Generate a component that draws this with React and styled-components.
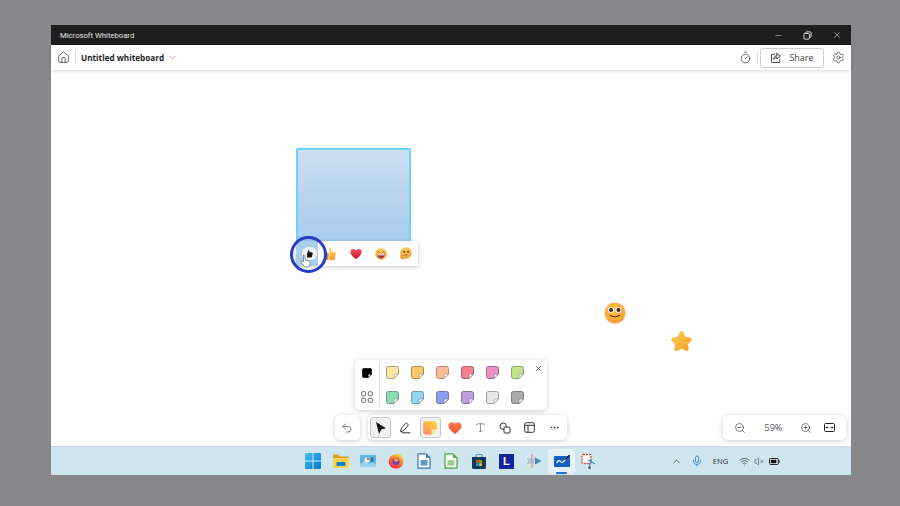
import React from "react";
import styled, { createGlobalStyle } from "styled-components";
import {
  House, ChevronDown, ChevronUp, Timer, Settings, Minus, X, Undo2, Type, MoreHorizontal,
  ZoomIn, ZoomOut, Mic, Wifi, VolumeX,
} from "lucide-react";

const Global = createGlobalStyle`
  html, body { margin: 0; padding: 0; height: 506px; background: #88888c; overflow: hidden; }
  body { font-family: "Open Sans", "Liberation Sans", sans-serif; }
`;

const Page = styled.div`
  width: 900px; height: 506px; padding: 25px 49px 31px 51px; box-sizing: border-box;
`;
const Win = styled.div`
  width: 800px; height: 450px; display: flex; flex-direction: column; background: #fff;
`;
const TitleBar = styled.div`
  height: 20px; flex: none; background: #1e1e1e; color: #e4e4e4; font: 7.7px Roboto, sans-serif;
  display: flex; align-items: center; padding-left: 9px;
`;
const TitleText = styled.span`flex: 1;`;
const WinBtn = styled.span`
  width: 29px; display: flex; justify-content: center; align-items: center; color: #d8d8d8;
`;
const Header = styled.div`
  height: 25px; flex: none; background: #fff; display: flex; align-items: center;
  padding-left: 5px; padding-right: 6px; box-shadow: 0 1px 4px rgba(0,0,0,.16); position: relative; z-index: 2;
`;
const IconSlot = styled.span`
  width: ${p => p.$w || 14}px; display: flex; justify-content: center; align-items: center; color: #2e2e2e; flex: none;
`;
const VRule = styled.span`
  width: 1px; height: 13px; background: #e2e2e2; flex: none;
  margin-left: ${p => p.$l}px; margin-right: ${p => p.$r}px;
`;
const DocTitle = styled.span`
  font: 700 8.2px "Open Sans", sans-serif; color: #1c1c1c; white-space: nowrap;
`;
const Spacer = styled.span`flex: 1;`;
const ShareBtn = styled.div`
  width: 64px; height: 20px; box-sizing: border-box; border: 1px solid #cfcfcf; border-radius: 3px;
  display: flex; align-items: center; justify-content: center; gap: 7px; font-size: 9px; color: #3f3f3f;
  margin-right: 7px;
`;
const Canvas = styled.div`
  flex: 1; position: relative; background: #fff; overflow: hidden;
`;
const Note = styled.div`
  position: absolute; left: 245px; top: 78px; width: 115px; height: 94px; box-sizing: border-box;
  border: 2px solid #6ed3f8; border-bottom: 0; border-radius: 2px 2px 0 0;
  background: linear-gradient(180deg, #cbdff1 0%, #b8d3ec 55%, #a6cdee 100%);
`;
const ReactionBar = styled.div`
  position: absolute; left: 245px; top: 171px; width: 122px; height: 25px; background: #fff; border-radius: 2px;
  box-shadow: 0 1px 5px rgba(0,0,0,.22); display: flex; align-items: center; box-sizing: border-box;
`;
const ReactBtn = styled.span`
  width: 25px; height: 25px; display: flex; align-items: center; justify-content: center; flex: none;
`;
const ActiveReact = styled(ReactBtn)`
  width: 22px; background: #a9cfec; padding-left: 4px; box-sizing: border-box;
`;
const ThumbPill = styled.span`
  width: 15px; height: 13px; border-radius: 6px; background: #eef3f7; display: flex; align-items: center; justify-content: center;
`;
const FocusRing = styled.div`
  position: absolute; left: 239px; top: 166px; width: 37px; height: 37px; border-radius: 50%;
  border: 3px solid #2a3cc6; box-sizing: border-box; z-index: 3;
`;
const Floating = styled.div`
  position: absolute; left: ${p => p.$x}px; top: ${p => p.$y}px; line-height: 0;
`;
const Cursor = styled(Floating)`z-index: 4;`;
const Panel = styled.div`
  position: absolute; background: #fff; border-radius: 5px; box-shadow: 0 1px 5px rgba(0,0,0,.2);
  left: ${p => p.$x}px; top: ${p => p.$y}px; width: ${p => p.$w}px; height: ${p => p.$h}px;
  padding-left: ${p => p.$pl || 0}px;
  display: flex; align-items: center; box-sizing: border-box;
`;
const StickyPanel = styled(Panel)`align-items: stretch;`;
const StickySide = styled.div`
  width: 25px; flex: none; border-right: 1px solid #e3e3e3; margin: 3px 0; display: flex; flex-direction: column;
  justify-content: space-between; align-items: center; box-sizing: border-box; height: 44px;
`;
const SideCell = styled.span`height: 20px; display: flex; align-items: center; justify-content: center; color: #444;`;
const StickyGrid = styled.div`
  display: grid; grid-template-columns: repeat(6, 25px); grid-auto-rows: 25px; padding-bottom: 1px; align-content: center;
`;
const StickyCell = styled.span`display: flex; align-items: center; justify-content: center;`;
const CloseBtn = styled.span`
  position: absolute; left: 179px; top: 4px; color: #222; line-height: 0;
`;
const ToolBtn = styled.span`
  width: ${p => p.$w || 24.9}px; height: 25px; display: flex; align-items: center; justify-content: center; color: #2c2c2c; flex: none;
`;
const ToolSel = styled.span`
  width: 21px; height: 21px; box-sizing: border-box; background: #f0f0f0; border: 1px solid #c9c9c9; border-radius: 3px;
  display: flex; align-items: center; justify-content: center;
`;
const ZoomLabel = styled.span`
  width: 41px; text-align: center; font-size: 9px; color: #555; flex: none;
`;
const Taskbar = styled.div`
  height: 29px; flex: none; background: #cfe6ef; border-top: 1px solid #cbd5da; box-sizing: border-box;
  display: flex; align-items: center; position: relative;
`;
const AppIcons = styled.div`
  display: flex; align-items: center; margin-left: 248.5px; width: 304px;
`;
const AppSlot = styled.span`
  width: 27.6px; height: 25px; flex: none; display: flex; align-items: center; justify-content: center; position: relative;
  background: ${p => (p.$active ? "#e4f1f6" : "transparent")}; border-radius: 3px;
`;
const RunBar = styled.span`
  position: absolute; left: 8px; right: 8px; bottom: 0; height: 2px; border-radius: 1px; background: #1a6fd0;
`;
const Tray = styled.div`
  display: flex; align-items: center; margin-left: 66px; color: #222;
`;
const TraySlot = styled.span`
  width: ${p => p.$w}px; margin-left: ${p => p.$ml || 0}px; display: flex; justify-content: center; align-items: center; flex: none;
`;
const Eng = styled.span`font-size: 7.5px; color: #2e2e2e;`;

const Restore = () => (
  <svg width="9" height="9" viewBox="0 0 10 10" fill="none" stroke="currentColor" strokeWidth="1.1">
    <rect x="1" y="2.8" width="6.2" height="6.2" rx="1" /><path d="M3 2.6V2a1 1 0 0 1 1-1h4a1 1 0 0 1 1 1v4a1 1 0 0 1-1 1h-.6" />
  </svg>
);
const ShareIcon = () => (
  <svg width="12" height="12" viewBox="0 0 16 16" fill="none" stroke="#333" strokeWidth="1.2" strokeLinejoin="round" strokeLinecap="round">
    <path d="M6 3H3a1 1 0 0 0-1 1v9a1 1 0 0 0 1 1h9a1 1 0 0 0 1-1v-3" />
    <path d="M9 2l5 3.6L9 9V7C6.8 7 5.5 8 5 10c0-3 1.5-5 4-5z" />
  </svg>
);
const Sticky = ({ fill, edge, size = 13 }) => (
  <svg width={size} height={size} viewBox="0 0 13 13">
    <path d="M2.5 .5h8a2 2 0 0 1 2 2V8L8 12.5H2.5a2 2 0 0 1-2-2v-8a2 2 0 0 1 2-2z" fill={fill} stroke={edge} strokeWidth="1" />
    <path d="M12.5 8H9.2A1.2 1.2 0 0 0 8 9.2v3.3z" fill="#fff" stroke={edge} strokeWidth=".7" strokeLinejoin="round" />
  </svg>
);
const GradSticky = () => (
  <svg width="14" height="14" viewBox="0 0 13 13">
    <defs><linearGradient id="gs" x1=".8" y1="0" x2=".1" y2="1"><stop offset="0" stopColor="#ffd23f" /><stop offset="1" stopColor="#ff8a62" /></linearGradient></defs>
    <path d="M2.500 .2h8a2.300 2.300 0 0 1 2.300 2.300V8L8 12.800H2.500A2.300 2.300 0 0 1 .2 10.500v-8A2.300 2.300 0 0 1 2.500 .2z" fill="url(#gs)" />
    <path d="M12.800 8H9.200A1.200 1.200 0 0 0 8 9.200v3.600z" fill="#ffe9a8" />
  </svg>
);
const GridIcon = () => (
  <svg width="12" height="12" viewBox="0 0 12 12" fill="none" stroke="#555" strokeWidth=".9">
    <rect x=".7" y=".7" width="4" height="4" rx="1" /><rect x="7.300" y=".7" width="4" height="4" rx="1" />
    <rect x=".7" y="7.300" width="4" height="4" rx="1" /><rect x="7.300" y="7.300" width="4" height="4" rx="1" />
  </svg>
);
const PenIcon = () => (
  <svg width="12" height="12" viewBox="0 0 12 12" fill="none" stroke="#333" strokeWidth="1" strokeLinejoin="round" strokeLinecap="round">
    <path d="M1.700 9.300l.7-3 4-4.700a1.300 1.300 0 0 1 1.900 0l.4.400a1.300 1.300 0 0 1 0 1.800L4.700 8.600z" />
    <path d="M3 10.800h8" />
  </svg>
);
const STICKIES = [
  ["#ffe79e", "#a89c80"], ["#ffc966", "#a08a60"], ["#ffbb95", "#a88e80"], ["#f57f8d", "#986670"], ["#ee8fc8", "#98708c"], ["#c6e08c", "#8c9c74"],
  ["#8fdcb4", "#749c8c"], ["#8fd6f2", "#7496a6"], ["#8c9ff2", "#707aa6"], ["#bd9cdf", "#84749c"], ["#e8e8e8", "#9c9c9c"], ["#ababab", "#808080"],
];

const ThumbDark = () => (
  <svg width="9" height="10" viewBox="0 0 13 14">
    <path d="M5 1.500c1.500 0 1.500 1.500 1.300 3h3.400c1 0 1.500 1 1.300 2L10 11c-.2.700-.6 1-1.400 1H3V6.500L5 1.500z" fill="#141414" />
  </svg>
);
const Thumb = () => (
  <svg width="13" height="14" viewBox="0 0 13 14">
    <defs><linearGradient id="tl" x1="0" y1="0" x2="0" y2="1"><stop offset="0" stopColor="#ffd45a" /><stop offset="1" stopColor="#f0a030" /></linearGradient></defs>
    <path d="M6 1c1.300 0 1.300 2 1 4h3.500c1.200 0 1.500 1 1.300 2l-1 5c-.2.800-.8 1.200-1.600 1.200H5.500V6C5.500 4 4.800 1 6 1z" fill="url(#tl)" />
    <rect x="1.500" y="6" width="3.200" height="7" rx=".8" fill="#e08f2a" />
  </svg>
);
const Heart = ({ size = 12, a = "#ff4d5e", b = "#c8102e", id = "hr" }) => (
  <svg width={size} height={size} viewBox="0 0 14 13">
    <defs><linearGradient id={id} x1="0" y1="0" x2="0" y2="1"><stop offset="0" stopColor={a} /><stop offset="1" stopColor={b} /></linearGradient></defs>
    <path d="M7 12.500C3 9.500.5 7.300.5 4.300.5 2.200 2 .8 3.800.8 5.200.8 6.300 1.500 7 2.700 7.700 1.500 8.800.8 10.200.8c1.800 0 3.300 1.400 3.300 3.500 0 3-2.500 5.200-6.500 8.200z" fill={`url(#${id})`} />
  </svg>
);
const Grin = () => (
  <svg width="12" height="12" viewBox="0 0 12 12">
    <defs><radialGradient id="gr" cx=".4" cy=".3" r=".85"><stop offset="0" stopColor="#ffd457" /><stop offset="1" stopColor="#f4913a" /></radialGradient></defs>
    <circle cx="6" cy="6" r="5.700" fill="url(#gr)" />
    <path d="M2.500 4.500q1-1.500 2 0M7.500 4.500q1-1.500 2 0" stroke="#5a3a2a" strokeWidth=".8" fill="none" />
    <path d="M2.500 6.300h7C9.500 9 8 10.200 6 10.200S2.500 9 2.500 6.300z" fill="#a0305a" />
    <path d="M3 6.300h6v1H3z" fill="#fff" />
  </svg>
);
const Think = () => (
  <svg width="13" height="13" viewBox="0 0 13 13">
    <defs><radialGradient id="th" cx=".45" cy=".3" r=".85"><stop offset="0" stopColor="#ffd050" /><stop offset="1" stopColor="#f19436" /></radialGradient></defs>
    <circle cx="7" cy="6" r="5.700" fill="url(#th)" />
    <circle cx="5.200" cy="4.800" r="1" fill="#5a3a2a" /><circle cx="9" cy="4.800" r="1" fill="#5a3a2a" />
    <path d="M5.500 8h3" stroke="#8a4a2a" strokeWidth=".8" />
    <path d="M1.500 8.500c1.500-.8 3-.5 4 .3 1 .9.600 3-1 3.300-2 .4-3.500-1-3-3.600z" fill="#f5a33e" stroke="#d87f2a" strokeWidth=".4" />
  </svg>
);
const Smiley = () => (
  <svg width="22" height="22" viewBox="0 0 22 22">
    <defs><radialGradient id="sm" cx=".45" cy=".35" r=".8"><stop offset="0" stopColor="#ffc83e" /><stop offset=".7" stopColor="#fba33a" /><stop offset="1" stopColor="#f27a4a" /></radialGradient></defs>
    <circle cx="11" cy="11" r="10.500" fill="url(#sm)" />
    <circle cx="7" cy="8" r="3" fill="#fff" opacity=".85" /><circle cx="14.500" cy="8" r="3" fill="#fff" opacity=".85" />
    <circle cx="7" cy="8" r="2" fill="#3c2440" /><circle cx="14.500" cy="8" r="2" fill="#3c2440" />
    <path d="M6.500 13.500q4.500 2.500 9 0" stroke="#5a2e1e" strokeWidth="1.200" fill="none" strokeLinecap="round" />
  </svg>
);
const Star = () => (
  <svg width="23" height="22" viewBox="0 0 24 23">
    <defs><linearGradient id="st" x1="0" y1="0" x2="1" y2="1"><stop offset="0" stopColor="#ffd24a" /><stop offset="1" stopColor="#f89a2c" /></linearGradient></defs>
    <path d="M12 1.500c1 0 1.500.8 2 1.800l2 4.200 4.600.7c2 .3 2.500 2 1.200 3.300l-3.400 3.300.8 4.700c.3 1.900-1.200 2.800-2.900 2L12 19.300 7.700 21.500c-1.700.8-3.200-.1-2.900-2l.8-4.700-3.400-3.300C.9 10.200 1.400 8.500 3.400 8.200L8 7.500l2-4.200c.5-1 1-1.800 2-1.800z" fill="url(#st)" stroke="#eda23e" strokeWidth=".5" />
  </svg>
);
const HandCursor = () => (
  <svg width="11" height="14" viewBox="0 0 11 14">
    <path d="M3.500 1.200c.6-.6 1.500-.2 1.500.7v4l3.700.8c1 .2 1.600 1 1.400 2l-.6 3c-.2.8-.8 1.300-1.600 1.300H5.500c-.6 0-1.100-.3-1.500-.8L1.200 8.500c-.6-1 .6-2 1.500-1.200l.8.7z" fill="#fff" stroke="#666" strokeWidth=".7" strokeLinejoin="round" />
  </svg>
);
const Arrow = () => (
  <svg width="13" height="14" viewBox="0 0 13 14"><path d="M2 1l10 6.200-4.500 1L5 13z" fill="#111" /></svg>
);
const Shapes = () => (
  <svg width="12" height="12" viewBox="0 0 12 12" fill="none" stroke="#333" strokeWidth="1">
    <circle cx="4.200" cy="4.200" r="3.200" /><rect x="5" y="5" width="6" height="6" rx="1" fill="#fff" />
  </svg>
);
const TableIcon = () => (
  <svg width="11" height="11" viewBox="0 0 11 11" fill="none" stroke="#333" strokeWidth="1">
    <rect x=".7" y=".7" width="9.600" height="9.600" rx="1.500" /><path d="M.7 3.300h9.600M4 3.300v7" />
  </svg>
);
const FitIcon = () => (
  <svg width="11" height="9" viewBox="0 0 11 9" fill="none" stroke="#222" strokeWidth="1">
    <rect x=".5" y=".5" width="10" height="8" rx="1" /><path d="M2 4.500h2.500M2 4.500l1-1M2 4.500l1 1M9 4.500H6.500M9 4.500l-1-1M9 4.500l-1 1" strokeWidth=".8" />
  </svg>
);
const Battery = () => (
  <svg width="11" height="7" viewBox="0 0 11 7">
    <rect x=".5" y=".5" width="8.800" height="6" rx="1" fill="none" stroke="#222" /><rect x="1.800" y="1.800" width="5.500" height="3.400" fill="#111" /><rect x="9.700" y="2.300" width="1" height="2.400" fill="#222" />
  </svg>
);

const Win11 = () => (
  <svg width="16" height="16" viewBox="0 0 16 16">
    <defs><linearGradient id="w" x1="0" y1="0" x2="1" y2="1"><stop offset="0" stopColor="#3cc4f4" /><stop offset="1" stopColor="#0c72cc" /></linearGradient></defs>
    <path d="M0 1a1 1 0 0 1 1-1h6.500v7.500H0zM8.500 0H15a1 1 0 0 1 1 1v6.500H8.500zM0 8.500h7.500V16H1a1 1 0 0 1-1-1zM8.500 8.500H16V15a1 1 0 0 1-1 1H8.500z" fill="url(#w)" />
  </svg>
);
const Folder = () => (
  <svg width="16" height="14" viewBox="0 0 16 14">
    <path d="M0 1.500A1 1 0 0 1 1 .5h4l2 2h8a1 1 0 0 1 1 1V5H0z" fill="#d9a028" />
    <path d="M0 4h16v9a1 1 0 0 1-1 1H1a1 1 0 0 1-1-1z" fill="#ffd257" />
    <rect x="3.500" y="8" width="9" height="4" rx=".8" fill="#1b7ec4" />
  </svg>
);
const Settings2 = () => (
  <svg width="16" height="12" viewBox="0 0 16 12">
    <rect width="16" height="12" rx="1" fill="#5cb6de" />
    <path d="M0 9l5-3 4 3 3-2 4 2v2a1 1 0 0 1-1 1H1a1 1 0 0 1-1-1z" fill="#9ed1e8" />
    <circle cx="7" cy="5" r="2.600" fill="#f2f2f2" /><path d="M7 2.400A2.600 2.600 0 0 1 9.600 5H7z" fill="#e86b3a" />
    <rect x="10.500" y="2.500" width="3" height="4.500" fill="#2c7ab0" />
  </svg>
);
const Firefox = () => (
  <svg width="16" height="16" viewBox="0 0 16 16">
    <defs><linearGradient id="ff" x1=".7" y1="0" x2=".2" y2="1"><stop offset="0" stopColor="#ffcf3c" /><stop offset=".5" stopColor="#ff6a2c" /><stop offset="1" stopColor="#e8215a" /></linearGradient></defs>
    <circle cx="8" cy="8.500" r="7.300" fill="url(#ff)" />
    <path d="M10 0c3 2 5 4.500 5.500 7L12 5z" fill="#ffc83c" />
    <circle cx="8" cy="8.300" r="3.600" fill="#6a3ac0" />
    <path d="M5.500 6c2-1.300 4.500-.8 5.500 1-1 2-3 2.500-4.500 1.500z" fill="#f4a12e" />
  </svg>
);
const DocIcon = ({ edge, light }) => (
  <svg width="14" height="16" viewBox="0 0 14 16">
    <path d="M1 .8h8l4 4v10.400H1z" fill="#fff" stroke={edge} strokeWidth="1.200" strokeLinejoin="round" />
    <path d="M9 .8v4h4z" fill={edge} />
    <rect x="3.500" y="7" width="7" height="5.500" fill={light} />
  </svg>
);
const Store = () => (
  <svg width="14" height="15" viewBox="0 0 14 15">
    <path d="M0 3h14v10.500a1.500 1.500 0 0 1-1.500 1.500h-11A1.500 1.500 0 0 1 0 13.500z" fill="#12395c" />
    <path d="M4 3V1.500A1.200 1.200 0 0 1 5.200.3h3.600A1.200 1.200 0 0 1 10 1.500V3" fill="none" stroke="#2f7fb0" />
    <rect x="4" y="6" width="2.800" height="2.800" fill="#f25022" /><rect x="7.200" y="6" width="2.800" height="2.800" fill="#7fba00" />
    <rect x="4" y="9.200" width="2.800" height="2.800" fill="#00a4ef" /><rect x="7.200" y="9.200" width="2.800" height="2.800" fill="#ffb900" />
  </svg>
);
const LLogo = styled.span`
  width: 15px; height: 15px; background: #14279a; color: #fff; font: 700 11px/15px "Liberation Sans", sans-serif; text-align: center; display: block;
`;
const Flow = () => (
  <svg width="15" height="14" viewBox="0 0 15 14">
    <path d="M8 3.500L14.500 7 8 10.500z" fill="#3f88c5" />
    <path d="M0 5h7M1 7h6M0 9h7" stroke="#82b4dc" strokeWidth="1.200" />
    <path d="M5 .5v13" stroke="#ef9a9a" strokeWidth="1.500" strokeLinecap="round" />
  </svg>
);
const WB = () => (
  <svg width="16" height="15" viewBox="0 0 16 15">
    <rect y="2" width="16" height="11" rx="1" fill="#1161c4" />
    <path d="M2.500 9c2-3 3-3 4-1.500s2 1 3 0L13 4.500" stroke="#fff" strokeWidth="1.200" fill="none" />
    <path d="M11 5.500l4-5 1 1-4 5z" fill="#111" />
  </svg>
);
const Snip = () => (
  <svg width="16" height="17" viewBox="0 0 16 17">
    <rect x="1" y="1.500" width="9" height="9" rx="1" fill="#fff" stroke="#d64a3a" strokeWidth="1.300" strokeDasharray="2 1" />
    <path d="M7 7l7 4M10 6l-1.500 7" stroke="#3f8fc0" strokeWidth="1.200" />
    <circle cx="8.500" cy="14.500" r="1.500" fill="#666" />
  </svg>
);

const App = () => (
  <>
    <Global />
    <Page>
      <Win>
        <TitleBar>
          <TitleText>Microsoft Whiteboard</TitleText>
          <WinBtn><Minus size={9} strokeWidth={1.4} /></WinBtn>
          <WinBtn><Restore /></WinBtn>
          <WinBtn><X size={10} strokeWidth={1.3} /></WinBtn>
        </TitleBar>
        <Header>
          <IconSlot $w={14}><House size={13} strokeWidth={1.3} /></IconSlot>
          <VRule $l={5} $r={5} />
          <DocTitle>Untitled whiteboard</DocTitle>
          <IconSlot $w={17}><ChevronDown size={11} strokeWidth={1.1} color="#555" /></IconSlot>
          <Spacer />
          <IconSlot $w={14}><Timer size={13} strokeWidth={1.3} /></IconSlot>
          <VRule $l={5} $r={2} />
          <ShareBtn><ShareIcon />Share</ShareBtn>
          <IconSlot $w={14}><Settings size={13} strokeWidth={1.2} /></IconSlot>
        </Header>
        <Canvas>
          <Note />
          <ReactionBar>
            <ActiveReact><ThumbPill><ThumbDark /></ThumbPill></ActiveReact>
            <ReactBtn><Thumb /></ReactBtn>
            <ReactBtn><Heart /></ReactBtn>
            <ReactBtn><Grin /></ReactBtn>
            <ReactBtn><Think /></ReactBtn>
          </ReactionBar>
          <FocusRing />
          <Cursor $x={249} $y={184}><HandCursor /></Cursor>
          <Floating $x={553} $y={232}><Smiley /></Floating>
          <Floating $x={619} $y={260}><Star /></Floating>

          <StickyPanel $x={304} $y={290} $w={192} $h={50}>
            <StickySide>
              <SideCell><Sticky fill="#000" edge="#000" size={10} /></SideCell>
              <SideCell><GridIcon /></SideCell>
            </StickySide>
            <StickyGrid>
              {STICKIES.map(([f, e], i) => (
                <StickyCell key={i}><Sticky fill={f} edge={e} /></StickyCell>
              ))}
            </StickyGrid>
            <CloseBtn><X size={9} strokeWidth={1.5} /></CloseBtn>
          </StickyPanel>

          <Panel $x={284} $y={345} $w={25} $h={25}>
            <ToolBtn><Undo2 size={12} strokeWidth={1.2} /></ToolBtn>
          </Panel>
          <Panel $x={317} $y={345} $w={199} $h={25}>
            <ToolBtn><ToolSel><Arrow /></ToolSel></ToolBtn>
            <ToolBtn><PenIcon /></ToolBtn>
            <ToolBtn><ToolSel><GradSticky /></ToolSel></ToolBtn>
            <ToolBtn><Heart size={14} a="#ff7a4a" b="#ee5528" id="hs" /></ToolBtn>
            <ToolBtn><Type size={11} strokeWidth={1.1} /></ToolBtn>
            <ToolBtn><Shapes /></ToolBtn>
            <ToolBtn><TableIcon /></ToolBtn>
            <ToolBtn><MoreHorizontal size={11} strokeWidth={1.8} /></ToolBtn>
          </Panel>
          <Panel $x={672} $y={345} $w={123} $h={25} $pl={5}>
            <ToolBtn><ZoomOut size={12} strokeWidth={1.2} /></ToolBtn>
            <ZoomLabel>59%</ZoomLabel>
            <ToolBtn><ZoomIn size={12} strokeWidth={1.2} /></ToolBtn>
            <ToolBtn $w={22}><FitIcon /></ToolBtn>
          </Panel>
        </Canvas>
        <Taskbar>
          <AppIcons>
            <AppSlot><Win11 /></AppSlot>
            <AppSlot><Folder /></AppSlot>
            <AppSlot><Settings2 /></AppSlot>
            <AppSlot><Firefox /></AppSlot>
            <AppSlot><DocIcon edge="#2f78a8" light="#5a9ac4" /></AppSlot>
            <AppSlot><DocIcon edge="#41a83c" light="#9ccf8c" /></AppSlot>
            <AppSlot><Store /></AppSlot>
            <AppSlot><LLogo>L</LLogo></AppSlot>
            <AppSlot><Flow /></AppSlot>
            <AppSlot $active><WB /><RunBar /></AppSlot>
            <AppSlot><Snip /></AppSlot>
          </AppIcons>
          <Tray>
            <TraySlot $w={14}><ChevronUp size={11} strokeWidth={1.5} /></TraySlot>
            <TraySlot $w={26}><Mic size={12} color="#2f7fd4" strokeWidth={1.6} /></TraySlot>
            <TraySlot $w={22}><Eng>ENG</Eng></TraySlot>
            <TraySlot $w={18} $ml={4}><Wifi size={11} strokeWidth={1.4} /></TraySlot>
            <TraySlot $w={10}><VolumeX size={11} strokeWidth={1.2} /></TraySlot>
            <TraySlot $w={21}><Battery /></TraySlot>
          </Tray>
        </Taskbar>
      </Win>
    </Page>
  </>
);

export default App;
